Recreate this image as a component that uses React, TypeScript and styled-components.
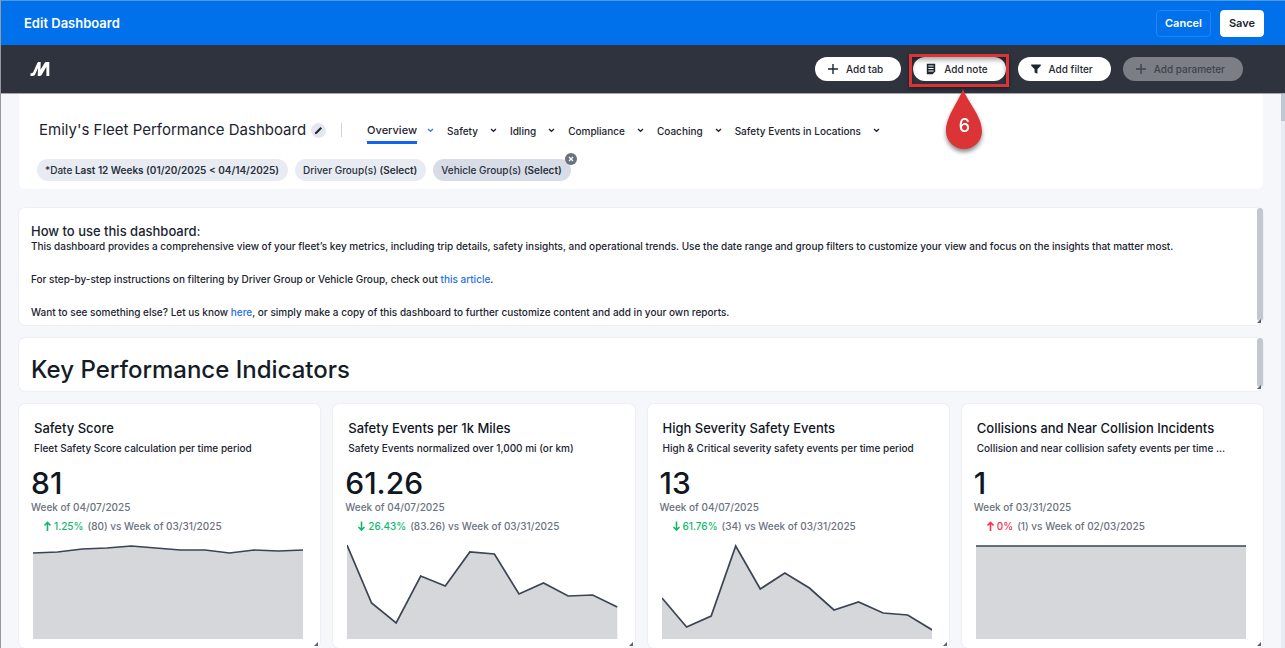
import React from 'react';
import styled, { createGlobalStyle } from 'styled-components';

const Global = createGlobalStyle`
  * { box-sizing: border-box; }
  body { margin: 0; background: #f5f7fa; color: #1b2430; font-family: Inter, "Liberation Sans", sans-serif; font-size: 10px; font-weight: 500; line-height: 16px; }
  h1, h2, h3, p { margin: 0; font-weight: 500; }
  button { font-family: inherit; font-weight: 500; margin: 0; cursor: pointer; }
  svg { display: block; flex: none; }
`;

const Page = styled.div`
  display: flex;
  flex-direction: column;
  height: 100vh;
  overflow: hidden;
  border-left: 1px solid #98999c;
`;

const EditBar = styled.header`
  flex: none;
  display: flex;
  align-items: center;
  justify-content: space-between;
  height: 45px;
  padding: 0 21px 0 23px;
  background: #0071eb;
  border-top: 1px solid #4c9be8;
`;

const EditTitle = styled.h1`
  font-size: 13px;
  font-weight: 600;
  color: #fff;
`;

const EditActions = styled.div`
  display: flex;
  gap: 9px;
`;

const ActionButton = styled.button<{ $solid?: boolean }>`
  height: 27px;
  padding: 0 8px;
  border-radius: 4px;
  border: 1px solid ${p => (p.$solid ? '#fff' : '#2683ef')};
  background: ${p => (p.$solid ? '#fff' : 'transparent')};
  color: ${p => (p.$solid ? '#1b2430' : '#fff')};
  font-size: 11px;
  font-weight: 600;
`;

const Toolbar = styled.div`
  flex: none;
  display: flex;
  align-items: center;
  justify-content: space-between;
  height: 49px;
  padding: 0 42px 0 29px;
  background: #2f333e;
  border-bottom: 1px solid #a5a7ac;
`;

const ToolbarButtons = styled.div`
  display: flex;
  gap: 12px;
`;

const PillButton = styled.button`
  display: flex;
  align-items: center;
  gap: 7px;
  height: 24px;
  padding: 0 18px 0 12px;
  border: 0;
  border-radius: 12px;
  background: #fff;
  color: #1f2733;
  font-size: 10px;
  white-space: nowrap;
  &:disabled { background: #7b7e85; color: #3f434d; }
`;

const Highlighted = styled.div`
  position: relative;
`;

const HighlightBox = styled.div`
  position: absolute;
  inset: -3px -3px -6px -4px;
  border: 3px solid #dc3436;
  box-shadow: 0 2px 4px rgba(0, 0, 0, 0.4), inset 0 3px 5px rgba(0, 0, 0, 0.35);
  pointer-events: none;
`;

const Callout = styled.div`
  position: absolute;
  z-index: 2;
  top: 31px;
  left: 50%;
  width: 36px;
  height: 62px;
  margin-left: -13px;
  filter: drop-shadow(0 3px 2px rgba(0, 0, 0, 0.45));
  svg { position: absolute; inset: 0; }
  span {
    position: absolute;
    inset: 30px 0 auto;
    text-align: center;
    font-size: 18px;
    color: #fff;
  }
`;

const Body = styled.div`
  flex: 1;
  min-height: 0;
  display: flex;
`;

const Main = styled.main`
  flex: 1;
  min-width: 0;
  padding: 0 18px;
  overflow: hidden;
`;

const ScrollTrack = styled.div`
  flex: none;
  width: 4px;
  background: #e9edf3;
`;

const ScrollThumb = styled.div`
  height: 27px;
  background: #c1c7d1;
`;

const HeadPanel = styled.section`
  height: 95px;
  padding: 24px 18px 0;
  background: #fff;
  border-radius: 0 0 6px 6px;
`;

const TitleRow = styled.div`
  display: flex;
  align-items: center;
  height: 24px;
  padding-left: 2px;
`;

const DashboardTitle = styled.h2`
  font-size: 15px;
  font-weight: 400;
  white-space: nowrap;
`;

const EditName = styled.button`
  display: grid;
  place-items: center;
  width: 15px;
  height: 15px;
  margin-left: 5px;
  padding: 0;
  border: 0;
  border-radius: 50%;
  background: #e4e8ee;
`;

const Divider = styled.span`
  width: 1px;
  height: 14px;
  margin: 0 25px 0 15px;
  background: #cdd3dc;
`;

const Tabs = styled.nav`
  display: flex;
  align-items: center;
  gap: 13px;
`;

const TabItem = styled.div<{ $active?: boolean }>`
  display: flex;
  align-items: center;
  gap: ${p => (p.$active ? 10 : 12)}px;
  color: ${p => (p.$active ? '#2f7bf6' : '#1b2430')};
`;

const TabLink = styled.a<{ $active?: boolean }>`
  padding: ${p => (p.$active ? '6px 0 3px' : '2px 0 0')};
  border-bottom: ${p => (p.$active ? '3px solid #1462f0' : '0')};
  color: #1b2430;
  font-size: ${p => (p.$active ? 11 : 10)}px;
  text-decoration: none;
  white-space: nowrap;
`;

const Filters = styled.div`
  display: flex;
  gap: 7px;
  margin-top: 17px;
`;

const FilterWrap = styled.div`
  position: relative;
`;

const Chip = styled.button<{ $selected?: boolean }>`
  height: 22px;
  padding: 0 9px 0 8px;
  border: 0;
  border-radius: 11px;
  background: ${p => (p.$selected ? '#d8dce6' : '#e8ebf1')};
  color: #27303c;
  font-size: 10px;
  white-space: nowrap;
  b { font-weight: 600; }
`;

const RemoveChip = styled.button`
  position: absolute;
  top: -6px;
  right: -6px;
  display: grid;
  place-items: center;
  width: 12px;
  height: 12px;
  padding: 0;
  border: 0;
  border-radius: 50%;
  background: #69717f;
`;

const Card = styled.section`
  position: relative;
  background: #fff;
  border-radius: 6px;
  box-shadow: 0 0 2px rgba(30, 50, 90, 0.12);
`;

const Note = styled(Card)<{ $first?: boolean }>`
  display: flex;
  justify-content: space-between;
  margin-top: ${p => (p.$first ? 19 : 13)}px;
`;

const NoteText = styled.div`
  min-width: 0;
  padding: 16px 0 5px 12px;
  h3 { font-size: 13px; line-height: 15px; }
  p { line-height: 15px; margin-bottom: 18px; }
  p:last-child { margin-bottom: 0; }
  a { color: #1f6fe8; text-decoration: none; }
`;

const SectionTitle = styled.h2`
  padding: 16px 12px 5px;
  font-size: 24px;
  line-height: 32px;
  color: #141c26;
`;

const NoteScroll = styled.div`
  flex: none;
  width: 6px;
  margin-bottom: 4px;
  border-radius: 3px;
  background: #c2c8d2;
`;

const Grip = styled.svg`
  position: absolute;
  right: 2px;
  bottom: 2px;
`;

const KpiGrid = styled.div`
  display: grid;
  grid-template-columns: repeat(4, minmax(0, 1fr));
  gap: 13px;
  margin-top: 13px;
`;

const KpiCard = styled(Card)`
  padding: 16px 17px 9px 12px;
`;

const KpiHead = styled.div`
  padding: 0 16px 0 3px;
  h3 { font-size: 13px; color: #10161f; white-space: nowrap; }
  p { margin-top: 4px; overflow: hidden; text-overflow: ellipsis; white-space: nowrap; }
`;

const KpiValue = styled.div`
  margin-top: 11px;
  font-size: 30px;
  line-height: 32px;
  color: #0f1722;
`;

const Period = styled.p`
  color: #6b7280;
`;

const Delta = styled.p<{ $bad?: boolean }>`
  display: flex;
  align-items: center;
  gap: 4px;
  margin-top: 3px;
  padding-left: 12px;
  color: #6b7280;
  strong { display: flex; align-items: center; gap: 2px; font-weight: 500; color: ${p => (p.$bad ? '#f5314a' : '#12b76f')}; }
`;

const Chart = styled.svg`
  width: calc(100% - 2px);
  margin: 10px 0 0 2px;
`;

const PlusIcon = () => (
  <svg width="12" height="12" viewBox="0 0 12 12" stroke="currentColor" strokeWidth="1.4"><path d="M6 1v10M1 6h10" /></svg>
);
const NoteIcon = () => (
  <svg width="12" height="12" viewBox="0 0 12 12">
    <path d="M1.800 .8h8.400v7.600l-2.600 2.800H1.800z" fill="currentColor" />
    <path d="M3.400 3h5.200M3.400 5.500h5.200M3.400 8h5.200" stroke="#fff" strokeWidth="1" />
  </svg>
);
const FunnelIcon = () => (
  <svg width="12" height="12" viewBox="0 0 12 12"><path d="M1.200 1.500h9.600v1.200L7.400 6.300v4.500L4.600 9.600V6.300L1.200 2.700z" fill="currentColor" /></svg>
);
const Chevron = () => (
  <svg width="7" height="5" viewBox="0 0 7 5" fill="none" stroke="currentColor" strokeWidth="1.3"><path d="M1 1l2.500 2.300L6 1" /></svg>
);
const ResizeGrip = () => (
  <Grip width="4" height="4" viewBox="0 0 4 4"><path d="M4 0v4H0z" fill="#596069" /></Grip>
);
const Arrow = ({ up }: { up: boolean }) => (
  <svg width="9" height="11" viewBox="0 0 9 11" fill="none" stroke="currentColor" strokeWidth="1.6">
    {up ? <path d="M4.500 10V1.500M1.500 4.500l3-3 3 3" /> : <path d="M4.500 0.500V9M1.500 6l3 3 3-3" />}
  </svg>
);

const tabs = ['Overview', 'Safety', 'Idling', 'Compliance', 'Coaching', 'Safety Events in Locations'];

type Kpi = { title: string; sub: string; value: string; week: string; up: boolean; bad?: boolean; pct: string; versus: string; points: number[] };

const kpis: Kpi[] = [
  { title: 'Safety Score', sub: 'Fleet Safety Score calculation per time period', value: '81', week: '04/07/2025', up: true, pct: '1.25%', versus: '(80) vs Week of 03/31/2025', points: [9, 8, 5, 4, 2, 4, 6, 6, 9, 6, 7, 6] },
  { title: 'Safety Events per 1k Miles', sub: 'Safety Events normalized over 1,000 mi (or km)', value: '61.26', week: '04/07/2025', up: false, pct: '26.43%', versus: '(83.26) vs Week of 03/31/2025', points: [1, 59, 79, 32, 42, 8, 10, 50, 39, 52, 51, 63] },
  { title: 'High Severity Safety Events', sub: 'High & Critical severity safety events per time period', value: '13', week: '04/07/2025', up: false, pct: '61.76%', versus: '(34) vs Week of 03/31/2025', points: [54, 83, 72, 2, 45, 29, 44, 66, 58, 69, 71, 86] },
  { title: 'Collisions and Near Collision Incidents', sub: 'Collision and near collision safety events per time …', value: '1', week: '03/31/2025', up: true, bad: true, pct: '0%', versus: '(1) vs Week of 02/03/2025', points: [2, 2, 2, 2, 2, 2, 2, 2, 2, 2, 2, 2] },
];

const AreaChart = ({ points, label }: { points: number[]; label: string }) => {
  const line = points.map((y, i) => `${(i * 270) / (points.length - 1)},${y}`).join(' ');
  return (
    <Chart height="95" viewBox="0 0 270 95" preserveAspectRatio="none" role="img" aria-label={label}>
      <polygon points={`0,95 ${line} 270,95`} fill="#d5d7db" />
      <polyline points={line} fill="none" stroke="#3a4452" strokeWidth="1.7" />
    </Chart>
  );
};

export default function App() {
  return (
    <>
      <Global />
      <Page>
        <EditBar>
          <EditTitle>Edit Dashboard</EditTitle>
          <EditActions>
            <ActionButton>Cancel</ActionButton>
            <ActionButton $solid>Save</ActionButton>
          </EditActions>
        </EditBar>
        <Toolbar>
          <svg width="20" height="16" viewBox="0 0 20 16" fill="#fff" aria-label="Home">
            <path d="M0.500 15v-2.800h1.200c.8 0 1.200-.3 1.600-1.100L7.200 2.200C7.600 1.300 8.100 1 8.800 1h1.900l-.2 7.800L14.600 2.100c.4-.8.9-1.100 1.700-1.100h3V15h-2.900V5.800l-4.500 7.800c-.5 1-1.100 1.400-2.100 1.400H7.700l.3-7.900-2.400 5.400C4.900 14.300 4 15 2.400 15z" />
          </svg>
          <ToolbarButtons>
            <PillButton><PlusIcon />Add tab</PillButton>
            <Highlighted>
              <PillButton><NoteIcon />Add note</PillButton>
              <HighlightBox />
              <Callout>
                <svg width="36" height="62" viewBox="0 0 36 62"><path d="M17 1C21 13 36 28 36 43a18 18 0 0 1-36 0C0 28 13 13 17 1z" fill="#dc3436" /></svg>
                <span>6</span>
              </Callout>
            </Highlighted>
            <PillButton><FunnelIcon />Add filter</PillButton>
            <PillButton disabled><PlusIcon />Add parameter</PillButton>
          </ToolbarButtons>
        </Toolbar>
        <Body>
          <Main>
            <HeadPanel>
              <TitleRow>
                <DashboardTitle>Emily's Fleet Performance Dashboard</DashboardTitle>
                <EditName aria-label="Rename dashboard">
                  <svg width="9" height="9" viewBox="0 0 9 9"><path d="M0.800 8.200l.5-2L6.500 1l1.500 1.500-5.200 5.200z" fill="#1b2430" /></svg>
                </EditName>
                <Divider />
                <Tabs>
                  {tabs.map((t, i) => (
                    <TabItem key={t} $active={i === 0}>
                      <TabLink href="#" $active={i === 0}>{t}</TabLink>
                      <Chevron />
                    </TabItem>
                  ))}
                </Tabs>
              </TitleRow>
              <Filters>
                <Chip>*Date <b>Last 12 Weeks (01/20/2025 &lt; 04/14/2025)</b></Chip>
                <Chip>Driver Group(s) <b>(Select)</b></Chip>
                <FilterWrap>
                  <Chip $selected>Vehicle Group(s) <b>(Select)</b></Chip>
                  <RemoveChip aria-label="Remove filter">
                    <svg width="6" height="6" viewBox="0 0 6 6" stroke="#fff" strokeWidth="1.300"><path d="M1 1l4 4M5 1L1 5" /></svg>
                  </RemoveChip>
                </FilterWrap>
              </Filters>
            </HeadPanel>
            <Note $first>
              <NoteText>
                <h3>How to use this dashboard:</h3>
                <p>This dashboard provides a comprehensive view of your fleet’s key metrics, including trip details, safety insights, and operational trends. Use the date range and group filters to customize your view and focus on the insights that matter most.</p>
                <p>For step-by-step instructions on filtering by Driver Group or Vehicle Group, check out <a href="#">this article</a>.</p>
                <p>Want to see something else? Let us know <a href="#">here</a>, or simply make a copy of this dashboard to further customize content and add in your own reports.</p>
              </NoteText>
              <NoteScroll />
              <ResizeGrip />
            </Note>
            <Note>
              <SectionTitle>Key Performance Indicators</SectionTitle>
              <NoteScroll />
              <ResizeGrip />
            </Note>
            <KpiGrid>
              {kpis.map(k => (
                <KpiCard key={k.title}>
                  <KpiHead>
                    <h3>{k.title}</h3>
                    <p>{k.sub}</p>
                  </KpiHead>
                  <KpiValue>{k.value}</KpiValue>
                  <Period>Week of {k.week}</Period>
                  <Delta $bad={k.bad}>
                    <strong><Arrow up={k.up} />{k.pct}</strong>
                    <span>{k.versus}</span>
                  </Delta>
                  <AreaChart points={k.points} label={k.title} />
                  <ResizeGrip />
                </KpiCard>
              ))}
            </KpiGrid>
          </Main>
          <ScrollTrack><ScrollThumb /></ScrollTrack>
        </Body>
      </Page>
    </>
  );
}
